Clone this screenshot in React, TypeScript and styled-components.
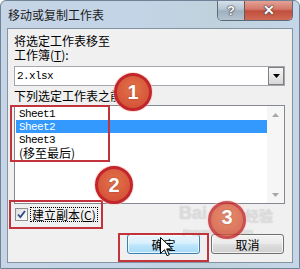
import React from 'react';
import styled, { createGlobalStyle } from 'styled-components';

const GlobalStyle = createGlobalStyle`
  html, body {
    margin: 0;
    padding: 0;
    background: #ffffff;
  }
  body {
    font-family: "Noto Sans CJK SC", "Liberation Sans", sans-serif;
  }
`;

const cjk = `"Noto Sans CJK SC", "Liberation Sans", sans-serif`;
const mono = `"Liberation Mono", "Noto Sans CJK SC", monospace`;

const Window = styled.div`
  position: relative;
  box-sizing: border-box;
  width: 300px;
  height: 269px;
  display: flex;
  flex-direction: column;
  padding: 0 6px 5px 6px;
  border: 1px solid #6f8296;
  border-radius: 6px 6px 0 0;
  background: linear-gradient(90deg, #c6d5e6 0%, #c2d4e7 45%, #bfd2dc 70%, #c4d6e8 100%);
  overflow: hidden;
`;

const TitleBar = styled.div`
  height: 27px;
  display: flex;
  align-items: flex-start;
  flex-shrink: 0;
`;

const Title = styled.span`
  margin: 7px 0 0 1px;
  font-family: ${cjk};
  font-size: 12px;
  line-height: 14px;
  color: #1b1b1b;
`;

const CaptionButtons = styled.div`
  margin-left: auto;
  margin-top: -1px;
  display: flex;
  height: 20px;
  border: 1px solid #5d6a78;
  border-top: none;
  border-radius: 0 0 5px 5px;
  overflow: hidden;
`;

const CaptionButton = styled.div<{ $close?: boolean }>`
  width: ${(p) => (p.$close ? '47px' : '26px')};
  display: flex;
  align-items: center;
  justify-content: center;
  font-family: "Liberation Sans", sans-serif;
  font-weight: bold;
  font-size: ${(p) => (p.$close ? '14px' : '13px')};
  color: #ffffff;
  text-shadow: 0 0 1px #333, 0 0 1px #333, 0 0 2px #555;
  border-left: ${(p) => (p.$close ? '1px solid #6b5656' : 'none')};
  background: ${(p) =>
    p.$close
      ? 'linear-gradient(180deg, #e6a79d 0%, #d5786a 45%, #c14f3e 55%, #d06a55 100%)'
      : 'linear-gradient(180deg, #d8e2ec 0%, #b8c6d4 45%, #9fb0c0 55%, #b5c3cf 100%)'};
`;

const Client = styled.div`
  flex: 1;
  display: flex;
  flex-direction: column;
  padding: 5px 7px 0 6px;
  border: 1px solid #8593a3;
  background: #f0f0f0;
`;

const Label = styled.div<{ $gap?: number }>`
  margin-top: ${(p) => p.$gap ?? 0}px;
  font-family: ${cjk};
  font-size: 12px;
  line-height: 14px;
  color: #000000;
  white-space: nowrap;
`;

const Combo = styled.div`
  box-sizing: border-box;
  margin-top: 4px;
  height: 20px;
  display: flex;
  align-items: center;
  border: 1px solid #a3a6ad;
  background: #ffffff;
`;

const ComboText = styled.span`
  flex: 1;
  padding-left: 2px;
  font-family: ${mono};
  font-size: 11px;
  letter-spacing: -0.6px;
  color: #000000;
`;

const DropButton = styled.div`
  box-sizing: border-box;
  width: 16px;
  height: 18px;
  display: flex;
  align-items: center;
  justify-content: center;
  border: 1px solid #7e7e7e;
  background: linear-gradient(180deg, #f4f4f4 0%, #e8e8e8 50%, #d6d6d6 100%);
`;

const ListBox = styled.div`
  box-sizing: border-box;
  margin-top: 2px;
  height: 99px;
  display: flex;
  border: 1px solid #848891;
  background: #ffffff;
`;

const Items = styled.div`
  flex: 1;
  padding: 1px 0 0 1px;
`;

const Item = styled.div<{ $selected?: boolean }>`
  height: 13px;
  padding-left: 3px;
  display: flex;
  align-items: center;
  font-family: ${mono};
  font-size: 11px;
  letter-spacing: -0.6px;
  color: ${(p) => (p.$selected ? '#ffffff' : '#000000')};
  background: ${(p) => (p.$selected ? '#3399ff' : 'transparent')};
`;

const CjkText = styled.span`
  font-family: ${cjk};
  font-size: 12px;
  letter-spacing: 0;
`;

const ScrollBar = styled.div`
  width: 17px;
  display: flex;
  flex-direction: column;
  justify-content: space-between;
  align-items: center;
  padding: 7px 0 6px;
  background: #f6f6f6;
`;

const CheckRow = styled.div`
  margin-top: 3px;
  height: 15px;
  display: flex;
  align-items: center;
  gap: 2px;
  padding-left: 1px;
`;

const CheckBox = styled.div`
  box-sizing: border-box;
  width: 13px;
  height: 13px;
  display: flex;
  align-items: center;
  justify-content: center;
  border: 1px solid #8e8f8f;
  background: linear-gradient(135deg, #dcdcdc 0%, #f2f2f2 60%, #ffffff 100%);
`;

const CheckLabel = styled.span`
  padding: 0 1px;
  border: 1px dotted #000000;
  font-family: ${cjk};
  font-size: 12px;
  line-height: 13px;
  color: #000000;
`;

const ButtonRow = styled.div`
  margin-top: 12px;
  display: flex;
  justify-content: flex-end;
  gap: 11px;
  padding-right: 1px;
`;

const DialogButton = styled.div<{ $hot?: boolean }>`
  box-sizing: border-box;
  width: 73px;
  height: 20px;
  display: flex;
  align-items: center;
  justify-content: center;
  border-radius: 3px;
  font-family: ${cjk};
  font-size: 12px;
  color: #000000;
  border: 1px solid ${(p) => (p.$hot ? '#3c7fb1' : '#707070')};
  background: ${(p) =>
    p.$hot
      ? 'linear-gradient(180deg, #eaf6fd 0%, #d9f0fc 45%, #bee6fd 55%, #a7d9f5 100%)'
      : 'linear-gradient(180deg, #f2f2f2 0%, #ebebeb 45%, #dddddd 55%, #cfcfcf 100%)'};
  box-shadow: inset 0 0 0 1px rgba(255, 255, 255, 0.7);
`;

const RedBox = styled.div`
  position: absolute;
  box-sizing: border-box;
  border: 2px solid #c3333b;
  pointer-events: none;
`;

const Marker = styled.div<{ $faded?: boolean }>`
  position: absolute;
  box-sizing: border-box;
  width: 38px;
  height: 38px;
  border-radius: 50%;
  display: flex;
  align-items: center;
  justify-content: center;
  border: 3px solid #c2262c;
  background: radial-gradient(circle at 50% 40%, #e2744c 0%, #d85a3c 60%, #cf4a36 100%);
  box-shadow: 0 0 0 1px rgba(255, 200, 190, 0.6);
  opacity: ${(p) => (p.$faded ? 0.8 : 1)};
  font-family: "Liberation Sans", sans-serif;
  font-weight: bold;
  font-size: 20px;
  color: #ffffff;
  text-shadow: 0 0 2px rgba(120, 20, 10, 0.6);
`;

const Watermark = styled.span<{ $size: number }>`
  position: absolute;
  font-family: "Liberation Sans", ${cjk};
  font-weight: bold;
  font-size: ${(p) => p.$size}px;
  color: rgba(255, 255, 255, 0.5);
  text-shadow: 0 0 1px rgba(90, 90, 90, 0.4);
  pointer-events: none;
  white-space: nowrap;
`;

const Cursor = styled.svg`
  position: absolute;
  left: 159px;
  top: 236px;
`;

const sheets = ['Sheet1', 'Sheet2', 'Sheet3'];

const App: React.FC = () => (
  <>
    <GlobalStyle />
    <Window>
      <TitleBar>
        <Title>移动或复制工作表</Title>
        <CaptionButtons>
          <CaptionButton>?</CaptionButton>
          <CaptionButton $close>✕</CaptionButton>
        </CaptionButtons>
      </TitleBar>
      <Client>
        <Label>将选定工作表移至</Label>
        <Label>
          工作簿(<u>T</u>):
        </Label>
        <Combo>
          <ComboText>2.xlsx</ComboText>
          <DropButton>
            <svg width="7" height="4" viewBox="0 0 7 4">
              <path d="M0 0h7L3.5 4z" fill="#000" />
            </svg>
          </DropButton>
        </Combo>
        <Label $gap={3}>下列选定工作表之前</Label>
        <ListBox>
          <Items>
            {sheets.map((name) => (
              <Item key={name} $selected={name === 'Sheet2'}>
                {name}
              </Item>
            ))}
            <Item>
              <CjkText>(移至最后)</CjkText>
            </Item>
          </Items>
          <ScrollBar>
            <svg width="7" height="4" viewBox="0 0 7 4">
              <path d="M0 4h7L3.5 0z" fill="#a8a8a8" />
            </svg>
            <svg width="7" height="4" viewBox="0 0 7 4">
              <path d="M0 0h7L3.5 4z" fill="#a8a8a8" />
            </svg>
          </ScrollBar>
        </ListBox>
        <CheckRow>
          <CheckBox>
            <svg width="9" height="9" viewBox="0 0 9 9">
              <path d="M1 4.5l2.4 2.6L8 1" fill="none" stroke="#2a4a8a" strokeWidth="1.8" />
            </svg>
          </CheckBox>
          <CheckLabel>
            建立副本(<u>C</u>)
          </CheckLabel>
        </CheckRow>
        <ButtonRow>
          <DialogButton $hot>确定</DialogButton>
          <DialogButton>取消</DialogButton>
        </ButtonRow>
      </Client>

      <Watermark $size={18} style={{ left: 178, top: 202 }}>Bai</Watermark>
      <Watermark $size={14} style={{ left: 244, top: 204 }}>经验</Watermark>
      <Watermark $size={8} style={{ left: 182, top: 226 }}>jingyan.baidu.com</Watermark>

      <RedBox style={{ left: 9, top: 104, width: 100, height: 57 }} />
      <RedBox style={{ left: 8, top: 199, width: 94, height: 29 }} />
      <RedBox style={{ left: 117, top: 232, width: 91, height: 29 }} />

      <Marker style={{ left: 113, top: 72 }}>1</Marker>
      <Marker style={{ left: 94, top: 165 }}>2</Marker>
      <Marker $faded style={{ left: 207, top: 200, alignItems: 'flex-start', paddingTop: 2 }}>
        3
      </Marker>

      <Cursor width="13" height="20" viewBox="0 0 13 20">
        <path
          d="M0.5 0.5v16l4-3.8 2.6 6 2.2-1-2.6-5.8h5.6z"
          fill="#ffffff"
          stroke="#000000"
          strokeWidth="1"
          strokeLinejoin="round"
        />
      </Cursor>
    </Window>
  </>
);

export default App;
